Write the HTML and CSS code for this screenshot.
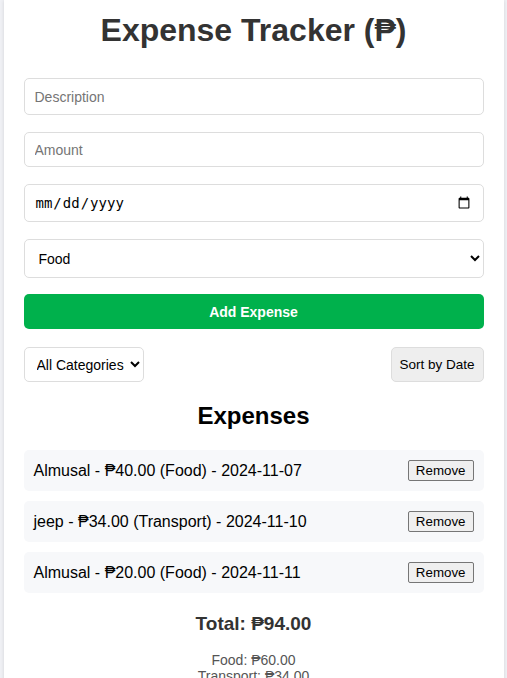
FILE: index.html
```html
<!DOCTYPE html>
<html lang="en">
<head>
<meta charset="utf-8">
<title>Expense Tracker</title>
<link rel="stylesheet" href="styles.css">
</head>
<body>
<div class="container">
  <h1 class="title">Expense Tracker (₱)</h1>
  <form class="form">
    <input class="field field-desc" type="text" placeholder="Description">
    <input class="field field-amount" type="number" placeholder="Amount">
    <input class="field field-date" type="date">
    <select class="field field-cat">
      <option>Food</option>
      <option>Transport</option>
      <option>Other</option>
    </select>
    <button type="button" class="add-btn">Add Expense</button>
  </form>
  <div class="filters">
    <select class="filter-select">
      <option>All Categories</option>
      <option>Food</option>
      <option>Transport</option>
    </select>
    <button type="button" class="sort-btn">Sort by Date</button>
  </div>
  <h2 class="list-title">Expenses</h2>
  <ul class="list">
    <li class="item"><span>Almusal - ₱40.00 (Food) - 2024-11-07</span><button type="button" class="remove">Remove</button></li>
    <li class="item"><span>jeep - ₱34.00 (Transport) - 2024-11-10</span><button type="button" class="remove">Remove</button></li>
    <li class="item"><span>Almusal - ₱20.00 (Food) - 2024-11-11</span><button type="button" class="remove">Remove</button></li>
  </ul>
  <h3 class="total">Total: ₱94.00</h3>
  <div class="breakdown">
    <div>Food: ₱60.00</div>
    <div>Transport: ₱34.00</div>
  </div>
</div>
</body>
</html>
```
FILE: styles.css
```css
html, body {
  margin: 0;
  padding: 0;
}
body {
  background: #f0f1f5;
  font-family: "Liberation Sans", Arial, "DejaVu Sans", sans-serif;
}
.container {
  max-width: 500px;
  margin: 0 auto;
  background: #fff;
  box-shadow: 0 0 4px rgba(0, 0, 0, 0.12);
  padding: 12px 20px 20px;
  box-sizing: border-box;
  min-height: 700px;
}
.title {
  margin: 0;
  font-size: 32px;
  font-weight: bold;
  color: #333;
  text-align: center;
}
.form {
  display: flex;
  flex-direction: column;
  margin-top: 29px;
}
.field {
  box-sizing: border-box;
  width: 100%;
  border: 1px solid #ddd;
  border-radius: 5px;
  padding: 0 10px;
  font-family: "Liberation Sans", Arial, sans-serif;
  font-size: 14px;
  color: #000;
  background: #fff;
  margin: 0 0 17px;
}
.field::placeholder {
  color: #757575;
}
.field-desc { height: 37px; }
.field-amount { height: 35px; }
.field-date {
  height: 38px;
  font-family: "DejaVu Sans Mono", "Liberation Mono", monospace;
  font-size: 14px;
}
.field-cat {
  height: 39px;
  margin-bottom: 16px;
}
.add-btn {
  height: 35px;
  border: none;
  border-radius: 5px;
  background: #00b14c;
  color: #fff;
  font-family: "Liberation Sans", Arial, sans-serif;
  font-size: 14px;
  font-weight: bold;
  margin: 0;
}
.filters {
  display: flex;
  justify-content: space-between;
  align-items: center;
  margin-top: 18px;
}
.filter-select {
  box-sizing: border-box;
  height: 35px;
  border: 1px solid #ddd;
  border-radius: 5px;
  padding: 0 2px 0 8px;
  font-family: "Liberation Sans", Arial, sans-serif;
  font-size: 14px;
  background: #fff;
  color: #000;
}
.sort-btn {
  box-sizing: border-box;
  width: 93px;
  height: 35px;
  border: 1px solid #ddd;
  border-radius: 5px;
  background: #eee;
  font-family: "Liberation Sans", Arial, sans-serif;
  font-size: 13.5px;
  color: #000;
  padding: 0;
}
.list-title {
  margin: 20px 0 0;
  text-align: center;
  font-size: 24px;
  font-weight: bold;
  color: #000;
}
.list {
  list-style: none;
  margin: 20px 0 0;
  padding: 0;
  display: flex;
  flex-direction: column;
  gap: 10px;
}
.item {
  display: flex;
  justify-content: space-between;
  align-items: center;
  height: 41px;
  box-sizing: border-box;
  padding: 0 10px;
  background: #f7f8fa;
  border-radius: 5px;
  font-size: 16px;
  color: #000;
}
.remove {
  font-family: "Liberation Sans", Arial, sans-serif;
  font-size: 13.33px;
  height: 21px;
  padding: 0 7px;
  background: #efefef;
  border: 1px solid #767676;
  border-radius: 2px;
  color: #000;
}
.total {
  margin: 20px 0 0;
  text-align: center;
  font-size: 19px;
  font-weight: bold;
  color: #333;
}
.breakdown {
  margin-top: 17px;
  text-align: center;
  font-size: 14px;
  line-height: 16px;
  color: #555;
}
```
